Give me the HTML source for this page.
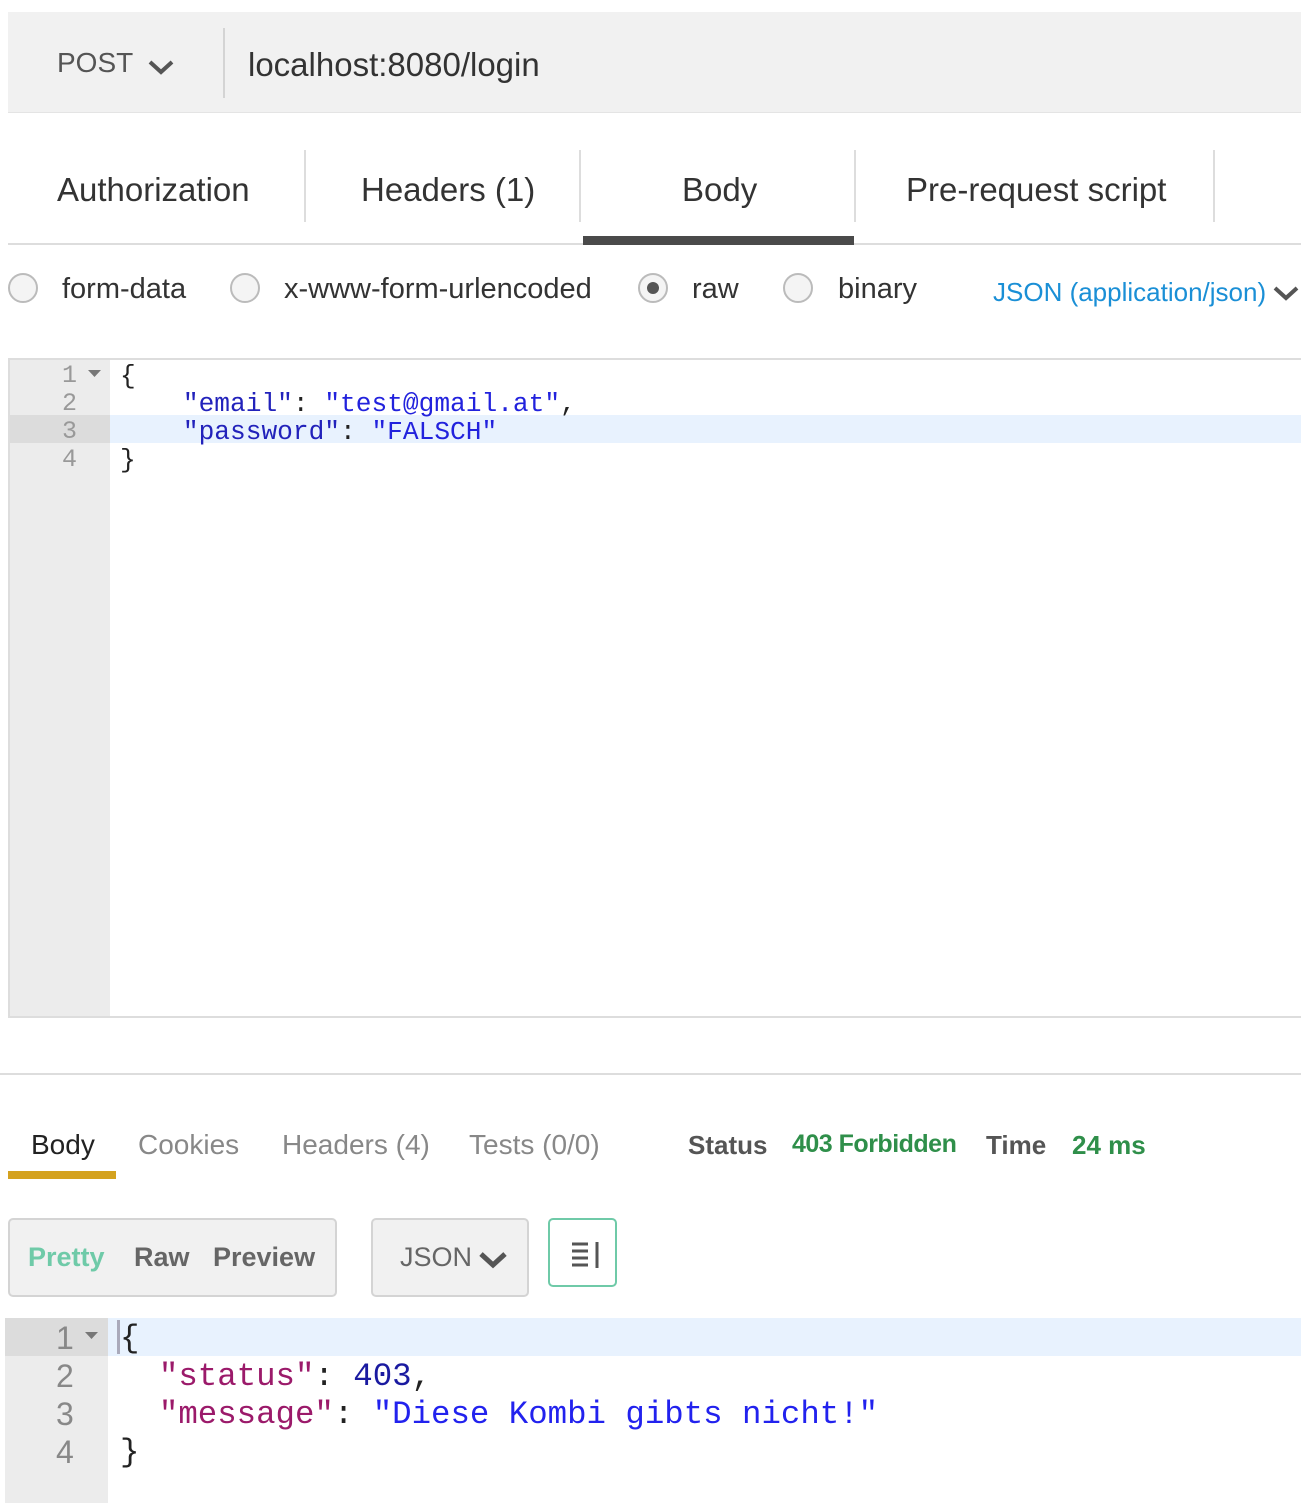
<!DOCTYPE html>
<html><head><meta charset="utf-8"><style>
*{margin:0;padding:0;box-sizing:border-box}
body{width:1301px;height:1503px;background:#fff;position:relative;overflow:hidden;font-family:"Liberation Sans",sans-serif;color:#333}
.a{position:absolute;white-space:nowrap}
.mono{font-family:"Liberation Mono",monospace}
.radio{position:absolute;width:30px;height:30px;border-radius:50%;border:2px solid #bbb;background:#f4f4f4}
</style></head><body>
<div class="a" style="left:8px;top:12px;width:1293px;height:101px;background:#f1f1f1;border-bottom:1px solid #e4e4e4"></div>
<div class="a" style="left:57px;top:47px;font-size:28px;color:#555">POST</div>
<svg class="a" style="left:147px;top:58px" width="28" height="18"><path d="M3 4 L14 14 L25 4" stroke="#555" stroke-width="4" fill="none"/></svg>
<div class="a" style="left:223px;top:28px;width:2px;height:70px;background:#d4d4d4"></div>
<div class="a" style="left:248px;top:46px;font-size:33px;color:#333">localhost:8080/login</div>

<div class="a" style="left:57px;top:171px;font-size:33px">Authorization</div>
<div class="a" style="left:304px;top:150px;width:2px;height:72px;background:#ddd"></div>
<div class="a" style="left:361px;top:171px;font-size:33px">Headers (1)</div>
<div class="a" style="left:579px;top:150px;width:2px;height:72px;background:#ddd"></div>
<div class="a" style="left:682px;top:171px;font-size:33px">Body</div>
<div class="a" style="left:854px;top:150px;width:2px;height:72px;background:#ddd"></div>
<div class="a" style="left:906px;top:171px;font-size:33px">Pre-request script</div>
<div class="a" style="left:1213px;top:150px;width:2px;height:72px;background:#ddd"></div>
<div class="a" style="left:8px;top:243px;width:1293px;height:2px;background:#ddd"></div>
<div class="a" style="left:583px;top:236px;width:271px;height:9px;background:#4a4a4a"></div>

<div class="radio" style="left:8px;top:273px"></div>
<div class="a" style="left:62px;top:273px;font-size:29px">form-data</div>
<div class="radio" style="left:230px;top:273px"></div>
<div class="a" style="left:284px;top:273px;font-size:29px">x-www-form-urlencoded</div>
<div class="radio" style="left:638px;top:273px"><div style="position:absolute;left:7px;top:7px;width:12px;height:12px;border-radius:50%;background:#555"></div></div>
<div class="a" style="left:692px;top:273px;font-size:29px">raw</div>
<div class="radio" style="left:783px;top:273px"></div>
<div class="a" style="left:838px;top:273px;font-size:29px">binary</div>
<div class="a" style="left:993px;top:277px;font-size:26px;color:#1a8fd6">JSON (application/json)</div>
<svg class="a" style="left:1272px;top:284px" width="28" height="18"><path d="M3 4 L14 14 L25 4" stroke="#555" stroke-width="4" fill="none"/></svg>

<div class="a" style="left:8px;top:358px;width:1293px;height:660px;border:2px solid #ddd;border-right:none"></div>
<div class="a" style="left:10px;top:360px;width:100px;height:656px;background:#ececec"></div>
<div class="a" style="left:110px;top:415px;width:1191px;height:28px;background:#e8f2fe"></div>
<div class="a" style="left:10px;top:415px;width:100px;height:28px;background:#dcdcdc"></div>
<div class="mono a" style="left:62px;top:362px;font-size:25px;line-height:28px;color:#999">1<br>2<br>3<br>4</div>
<svg class="a" style="left:88px;top:370px" width="14" height="8"><path d="M0 0H13L6.5 7Z" fill="#777"/></svg>
<div class="mono a" style="left:120px;top:362px;font-size:26.2px;line-height:28px;color:#222">{<br>&nbsp;&nbsp;&nbsp;&nbsp;<span style="color:#2222bb">"email"</span>: <span style="color:#2222dd">"test@gmail.at"</span>,<br>&nbsp;&nbsp;&nbsp;&nbsp;<span style="color:#2222bb">"password"</span>: <span style="color:#2222dd">"FALSCH"</span><br>}</div>

<div class="a" style="left:0;top:1073px;width:1301px;height:2px;background:#ddd"></div>
<div class="a" style="left:31px;top:1129px;font-size:28px;color:#222">Body</div>
<div class="a" style="left:8px;top:1171px;width:108px;height:8px;background:#d4a21f"></div>
<div class="a" style="left:138px;top:1129px;font-size:28px;color:#888">Cookies</div>
<div class="a" style="left:282px;top:1129px;font-size:28px;color:#888">Headers (4)</div>
<div class="a" style="left:469px;top:1129px;font-size:28px;color:#888">Tests (0/0)</div>
<div class="a" style="left:688px;top:1130px;font-size:26px;font-weight:bold;color:#555">Status</div>
<div class="a" style="left:792px;top:1130px;font-size:25px;font-weight:bold;color:#2f8f4a;letter-spacing:-0.5px">403 Forbidden</div>
<div class="a" style="left:986px;top:1130px;font-size:26px;font-weight:bold;color:#555">Time</div>
<div class="a" style="left:1072px;top:1130px;font-size:26px;font-weight:bold;color:#2f8f4a">24 ms</div>

<div class="a" style="left:8px;top:1218px;width:329px;height:79px;background:#f1f1f1;border:2px solid #d4d4d4;border-radius:5px"></div>
<div class="a" style="left:28px;top:1242px;font-size:27px;font-weight:bold;color:#6fcaa8">Pretty</div>
<div class="a" style="left:134px;top:1242px;font-size:27px;font-weight:bold;color:#666">Raw</div>
<div class="a" style="left:213px;top:1242px;font-size:27px;font-weight:bold;color:#666">Preview</div>
<div class="a" style="left:371px;top:1218px;width:158px;height:79px;background:#f1f1f1;border:2px solid #d4d4d4;border-radius:5px"></div>
<div class="a" style="left:400px;top:1242px;font-size:27px;color:#666">JSON</div>
<svg class="a" style="left:478px;top:1250px" width="30" height="20"><path d="M3 4 L15 15 L27 4" stroke="#555" stroke-width="5" fill="none"/></svg>
<div class="a" style="left:548px;top:1218px;width:69px;height:69px;border:2px solid #6fcaa8;border-radius:5px"></div>
<svg class="a" style="left:568px;top:1240px" width="34" height="30"><path d="M4 4H20M4 11H20M4 18H20M4 25H20" stroke="#555" stroke-width="3"/><path d="M29 2V28" stroke="#555" stroke-width="3"/></svg>

<div class="a" style="left:5px;top:1318px;width:103px;height:185px;background:#ececec"></div>
<div class="a" style="left:108px;top:1318px;width:1193px;height:38px;background:#e8f2fe"></div>
<div class="a" style="left:5px;top:1318px;width:103px;height:38px;background:#dcdcdc"></div>
<div class="a" style="left:117px;top:1320px;width:3px;height:34px;background:#aab"></div>
<div class="a" style="left:56px;top:1319px;font-size:32px;line-height:38px;color:#888">1<br>2<br>3<br>4</div>
<svg class="a" style="left:85px;top:1332px" width="14" height="8"><path d="M0 0H13L6.5 7Z" fill="#777"/></svg>
<div class="mono a" style="left:120px;top:1320px;font-size:32.4px;line-height:38px;color:#222">{<br>&nbsp;&nbsp;<span style="color:#9b1a6a">"status"</span>: <span style="color:#1a1aa0">403</span>,<br>&nbsp;&nbsp;<span style="color:#9b1a6a">"message"</span>: <span style="color:#2222ee">"Diese Kombi gibts nicht!"</span><br>}</div>
</body></html>
